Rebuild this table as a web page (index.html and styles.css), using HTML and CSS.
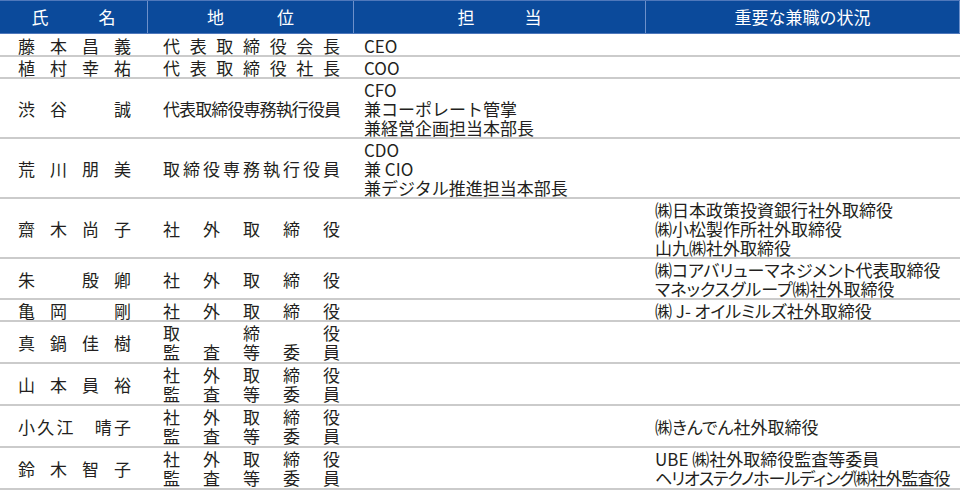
FILE: index.html
```html
<!DOCTYPE html>
<html lang="ja">
<head>
<meta charset="utf-8">
<title>役員一覧</title>
<link rel="stylesheet" href="styles.css">
</head>
<body>
<div class="table">
  <div class="row head">
    <div class="hc"><span class="hw">氏名</span></div>
    <div class="hc"><span class="hw wide">地位</span></div>
    <div class="hc"><span class="hw">担当</span></div>
    <div class="hc"><span>重要な兼職の状況</span></div>
  </div>

  <div class="row r1">
    <div class="c name"><span class="j">藤本昌義</span></div>
    <div class="c pos"><span class="j">代表取締役会長</span></div>
    <div class="c duty">CEO</div>
    <div class="c conc"></div>
  </div>

  <div class="row">
    <div class="c name"><span class="j">植村幸祐</span></div>
    <div class="c pos"><span class="j">代表取締役社長</span></div>
    <div class="c duty">COO</div>
    <div class="c conc"></div>
  </div>

  <div class="row">
    <div class="c name"><span class="j">渋谷　誠</span></div>
    <div class="c pos"><span class="j tight">代表取締役専務執行役員</span></div>
    <div class="c duty">CFO<br>兼コーポレート管掌<br>兼経営企画担当本部長</div>
    <div class="c conc"></div>
  </div>

  <div class="row">
    <div class="c name"><span class="j">荒川朋美</span></div>
    <div class="c pos"><span class="j">取締役専務執行役員</span></div>
    <div class="c duty">CDO<br>兼 CIO<br>兼デジタル推進担当本部長</div>
    <div class="c conc"></div>
  </div>

  <div class="row">
    <div class="c name"><span class="j">齋木尚子</span></div>
    <div class="c pos"><span class="j">社外取締役</span></div>
    <div class="c duty"></div>
    <div class="c conc">㈱日本政策投資銀行社外取締役<br>㈱小松製作所社外取締役<br>山九㈱社外取締役</div>
  </div>

  <div class="row">
    <div class="c name"><span class="j">朱　殷卿</span></div>
    <div class="c pos"><span class="j">社外取締役</span></div>
    <div class="c duty"></div>
    <div class="c conc">㈱コアバリューマネジメント代表取締役<br>マネックスグループ㈱社外取締役</div>
  </div>

  <div class="row">
    <div class="c name"><span class="j">亀岡　剛</span></div>
    <div class="c pos"><span class="j">社外取締役</span></div>
    <div class="c duty"></div>
    <div class="c conc">㈱ J- オイルミルズ社外取締役</div>
  </div>

  <div class="row two">
    <div class="c name"><span class="j">真鍋佳樹</span></div>
    <div class="c pos"><span class="j">取締役</span><span class="j">監査等委員</span></div>
    <div class="c duty"></div>
    <div class="c conc"></div>
  </div>

  <div class="row two">
    <div class="c name"><span class="j">山本員裕</span></div>
    <div class="c pos"><span class="j">社外取締役</span><span class="j">監査等委員</span></div>
    <div class="c duty"></div>
    <div class="c conc"></div>
  </div>

  <div class="row two">
    <div class="c name"><span class="j">小久江　晴子</span></div>
    <div class="c pos"><span class="j">社外取締役</span><span class="j">監査等委員</span></div>
    <div class="c duty"></div>
    <div class="c conc">㈱きんでん社外取締役</div>
  </div>

  <div class="row two">
    <div class="c name"><span class="j">鈴木智子</span></div>
    <div class="c pos"><span class="j">社外取締役</span><span class="j">監査等委員</span></div>
    <div class="c duty"></div>
    <div class="c conc"><span>UBE ㈱社外取締役監査等委員</span><span class="narrow">ヘリオステクノホールディング㈱社外監査役</span></div>
  </div>
</div>
</body>
</html>
```

FILE: styles.css
```css
html, body {
  margin: 0;
  padding: 0;
  background: #ffffff;
}

body {
  font-family: "Noto Sans CJK JP", "Noto Sans", sans-serif;
  font-size: 17px;
  color: #231f20;
  width: 960px;
}

.row {
  display: grid;
  grid-template-columns: 148px 206px 292px 314px;
  border-bottom: 2px solid #cbcbcb;
  padding-top: 1px;
  line-height: 19px;
}

.row.r1 {
  padding-top: 2px;
}

.row.two {
  padding-bottom: 1px;
}

.head {
  background: #0b4a9b;
  color: #ffffff;
  height: 32px;
  padding-top: 0;
  border-top: 1px solid #4f78bb;
  border-bottom: 1px solid #4f78bb;
  line-height: 32px;
}

.hc {
  display: flex;
  justify-content: center;
  align-items: center;
  border-right: 1px solid #6d90ca;
}

.hw {
  display: block;
  width: 84px;
  text-align: justify;
  text-align-last: justify;
}

.hw.wide {
  width: 87px;
}

.c {
  display: flex;
  flex-direction: column;
  justify-content: center;
}

.j {
  display: block;
  text-align: justify;
  text-align-last: justify;
}

.name {
  padding-left: 18px;
}

.name .j {
  width: 113px;
}

.pos {
  padding-left: 15px;
}

.pos .j {
  width: 177px;
}

.pos .j.tight {
  letter-spacing: -1px;
}

.duty {
  padding-left: 10px;
}

.conc {
  padding-left: 9px;
  white-space: nowrap;
  font-feature-settings: "palt" 1;
}

.conc .narrow {
  letter-spacing: -1px;
}
```
